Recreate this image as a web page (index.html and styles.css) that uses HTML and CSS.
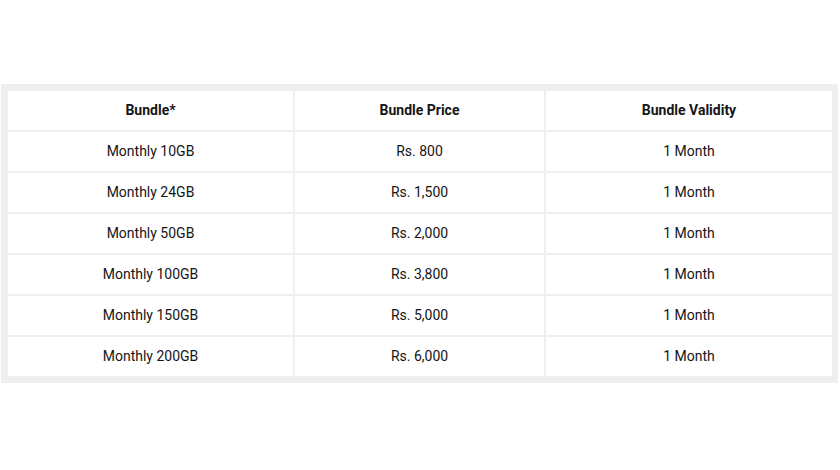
FILE: index.html
```html
<!DOCTYPE html>
<html>
<head>
<meta charset="utf-8">
<link rel="stylesheet" href="styles.css">
</head>
<body>
<div class="frame">
  <table class="bundles">
    <colgroup>
      <col class="c1"><col class="c2"><col class="c3">
    </colgroup>
    <thead>
      <tr><th>Bundle*</th><th>Bundle Price</th><th>Bundle Validity</th></tr>
    </thead>
    <tbody>
      <tr><td>Monthly 10GB</td><td>Rs. 800</td><td>1 Month</td></tr>
      <tr><td>Monthly 24GB</td><td>Rs. 1,500</td><td>1 Month</td></tr>
      <tr><td>Monthly 50GB</td><td>Rs. 2,000</td><td>1 Month</td></tr>
      <tr><td>Monthly 100GB</td><td>Rs. 3,800</td><td>1 Month</td></tr>
      <tr><td>Monthly 150GB</td><td>Rs. 5,000</td><td>1 Month</td></tr>
      <tr><td>Monthly 200GB</td><td>Rs. 6,000</td><td>1 Month</td></tr>
    </tbody>
  </table>
</div>
</body>
</html>
```

FILE: styles.css
```css
html, body {
  margin: 0;
  padding: 0;
  background: #fff;
}
body {
  font-family: Roboto, "Liberation Sans", Arial, sans-serif;
  color: #151515;
}
.frame {
  margin: 84px 0 0 1px;
  width: 837px;
  box-sizing: border-box;
  padding: 5px 4px 5px 5px;
  background: #efefef;
}
.bundles {
  width: 100%;
  border-collapse: separate;
  border-spacing: 2px;
  background: #efefef;
  table-layout: fixed;
}
.c1 { width: 285px; }
.c2 { width: 249px; }
.c3 { width: auto; }
.bundles th,
.bundles td {
  box-sizing: border-box;
  background: #fff;
  height: 39px;
  padding: 0 0 2px;
  text-align: center;
  vertical-align: middle;
  font-size: 14px;
}
.bundles th {
  font-weight: 700;
}
```
